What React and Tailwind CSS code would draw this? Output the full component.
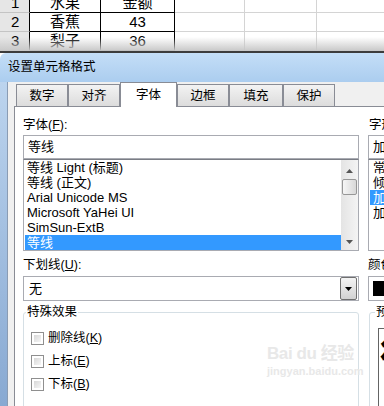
import React from 'react';

const rows = [
  { n: '1', a: '水果', b: '金额' },
  { n: '2', a: '香蕉', b: '43' },
  { n: '3', a: '梨子', b: '36' },
];

const tabs = [
  { label: '数字', w: 'w-[52px]' },
  { label: '对齐', w: 'w-[52px]' },
  { label: '字体', w: 'w-[57px]', active: true },
  { label: '边框', w: 'w-[52px]' },
  { label: '填充', w: 'w-[54px]' },
  { label: '保护', w: 'w-[52px]' },
];

const fonts = ['等线 Light (标题)', '等线 (正文)', 'Arial Unicode MS', 'Microsoft YaHei UI', 'SimSun-ExtB', '等线'];
const styles = ['常规', '倾斜', '加粗', '加粗 倾斜'];
const effects = [
  { label: '删除线', key: 'K' },
  { label: '上标', key: 'E' },
  { label: '下标', key: 'B' },
];

function Label({ text, k }) {
  return (
    <div className="h-[17px] leading-[17px] text-[12.5px]">
      {text}(<span className="underline">{k}</span>):
    </div>
  );
}

function DropButton() {
  return (
    <div className="w-[17px] h-[23px] border border-[#707070] rounded-[2px] bg-gradient-to-b from-[#f4f4f4] to-[#d2d2d2] flex items-center justify-center">
      <svg width="7" height="4" viewBox="0 0 7 4"><path d="M0 0h7L3.5 4z" fill="#000" /></svg>
    </div>
  );
}

export default function App() {
  return (
    <div className="w-[384px] h-[406px] overflow-hidden bg-white text-black font-['Liberation_Sans','Noto_Sans_CJK_SC',sans-serif]">
      {/* sheet behind the dialog */}
      <div className="relative h-[53px] overflow-hidden">
        <div className="-mt-[6px]">
          {rows.map((r) => (
            <div key={r.n} className="flex h-[19px] text-[15px] leading-[18px]">
              <div className="w-[30px] shrink-0 bg-[#e6e6e6] border-r border-b border-r-black border-b-[#c4c4c4] pl-[11px]">{r.n}</div>
              <div className="w-[71px] shrink-0 border-r border-b border-black text-center">{r.a}</div>
              <div className="w-[74px] shrink-0 border-r border-b border-black text-center">{r.b}</div>
              <div className="w-[70px] shrink-0 border-r border-b border-[#d4d4d4]"></div>
              <div className="w-[72px] shrink-0 border-r border-b border-[#d4d4d4]"></div>
              <div className="flex-1 border-b border-[#d4d4d4]"></div>
            </div>
          ))}
        </div>
        <div className="absolute left-0 right-0 top-[37px] h-[14px] bg-gradient-to-b from-white/0 to-[#c8c8c8]"></div>
        <div className="absolute left-0 right-0 top-[51px] h-[2px] bg-[#3c3c3c]"></div>
      </div>

      {/* dialog */}
      <div className="h-[29px] rounded-tl-[6px] bg-gradient-to-b from-[#c4def7] to-[#abcdef] pl-[8px] text-[12.5px] leading-[29px]">
        设置单元格格式
      </div>
      <div className="flex h-[324px]">
        <div className="w-[8px] shrink-0 bg-gradient-to-b from-[#bcd4ee] to-[#88a9d2] border-r border-[#8a9cb4]"></div>
        <div className="flex-1 bg-[#f0f0f0] pl-[6px] flex flex-col min-w-0">
          <div className="flex items-end h-[33px] pl-[2px]">
            {tabs.map((t) =>
              t.active ? (
                <div key={t.label} className={`${t.w} h-[25px] -mb-px relative z-10 bg-white border border-b-0 border-[#898c95] text-center text-[12.5px] leading-[24px]`}>
                  {t.label}
                </div>
              ) : (
                <div key={t.label} className={`${t.w} h-[22px] bg-gradient-to-b from-[#f3f3f3] to-[#dcdcdc] border border-b-0 border-[#898c95] text-center text-[12.5px] leading-[22px]`}>
                  {t.label}
                </div>
              )
            )}
          </div>
          <div className="relative flex-1 bg-white border-l border-t border-[#898c95] pl-[8px] pt-[10px] flex gap-[9px]">
            {/* left column */}
            <div className="w-[336px] shrink-0">
              <Label text="字体" k="F" />
              <div className="mt-px h-[24px] border border-[#a9abb2] px-[4px] text-[13px] leading-[22px]">等线</div>
              <div className="h-[92px] border border-t-[#7a7d85] border-[#a9abb2] flex">
                <div className="flex-1 pl-px">
                  {fonts.map((f, i) => (
                    <div key={f} className={`h-[15px] leading-[15px] text-[13px] pl-[2px] ${i === 5 ? 'bg-[#3399ff] text-white' : ''}`}>{f}</div>
                  ))}
                </div>
                <div className="w-[17px] bg-gradient-to-r from-[#e4e4e4] to-[#f4f4f4] flex flex-col items-center">
                  <div className="h-[18px] flex items-center pt-[4px]">
                    <svg width="7" height="4" viewBox="0 0 7 4"><path d="M3.5 0L7 4H0z" fill="#555" /></svg>
                  </div>
                  <div className="w-[15px] h-[16px] mt-px border border-[#979797] rounded-[2px] bg-gradient-to-r from-[#f6f6f6] to-[#d8d8d8]"></div>
                  <div className="mt-auto h-[16px] flex items-center">
                    <svg width="7" height="4" viewBox="0 0 7 4"><path d="M0 0h7L3.5 4z" fill="#555" /></svg>
                  </div>
                </div>
              </div>
              <div className="mt-[6px]">
                <Label text="下划线" k="U" />
              </div>
              <div className="mt-[2px] h-[25px] border border-[#a9abb2] flex items-center pl-[5px] pr-px">
                <span className="flex-1 text-[13px]">无</span>
                <DropButton />
              </div>
              <fieldset className="mt-[4px] h-[120px] border border-[#d5dfe5] rounded-[3px] pl-[2px]">
                <legend className="px-px text-[12.5px] leading-[14px]">特殊效果</legend>
                <div className="mt-[8px] pl-[5px]">
                  {effects.map((e) => (
                    <div key={e.key} className="h-[23px] flex items-center gap-[4px] text-[12.5px]">
                      <div className="w-[13px] h-[13px] border border-[#8f8f8f] p-[2px] bg-white">
                        <div className="w-full h-full bg-gradient-to-br from-[#d8d8d8] to-[#f6f6f6]"></div>
                      </div>
                      <span>
                        {e.label}(<span className="underline">{e.key}</span>)
                      </span>
                    </div>
                  ))}
                </div>
              </fieldset>
            </div>

            {/* right column */}
            <div className="w-[160px] shrink-0">
              <div className="pl-px">
                <Label text="字形" k="O" />
              </div>
              <div className="mt-px h-[24px] border border-[#a9abb2] px-[4px] text-[13px] leading-[22px]">加粗</div>
              <div className="h-[92px] border border-t-[#7a7d85] border-[#a9abb2] pl-px">
                {styles.map((s, i) => (
                  <div key={s} className={`h-[15px] leading-[15px] text-[13px] pl-[3px] ${i === 2 ? 'bg-[#3399ff] text-white' : ''}`}>{s}</div>
                ))}
              </div>
              <div className="mt-[6px]">
                <Label text="颜色" k="C" />
              </div>
              <div className="mt-[2px] h-[25px] border border-[#a9abb2] flex items-center pl-[4px]">
                <div className="w-[60px] h-[15px] bg-black"></div>
              </div>
              <fieldset className="mt-[4px] h-[120px] ml-px border border-[#d5dfe5] rounded-[3px] pl-[5px]">
                <legend className="px-px text-[12.5px] leading-[14px]">预览</legend>
                <div className="mt-[9px] ml-[3px] h-[90px] border border-[#646464] pl-[1px] overflow-hidden">
                  <div className="text-[42px] font-bold leading-none mt-[8px] whitespace-nowrap">微软卓越 AaBbCc</div>
                </div>
              </fieldset>
            </div>

            {/* watermark */}
            <div className="absolute left-[252px] top-[238px] text-[#e8e8e8] leading-none whitespace-nowrap">
              <div className="text-[17px] font-bold tracking-tight">Bai du 经验</div>
              <div className="mt-[4px] text-[11px] font-bold">jingyan.baidu.com</div>
            </div>
          </div>
        </div>
      </div>
    </div>
  );
}
